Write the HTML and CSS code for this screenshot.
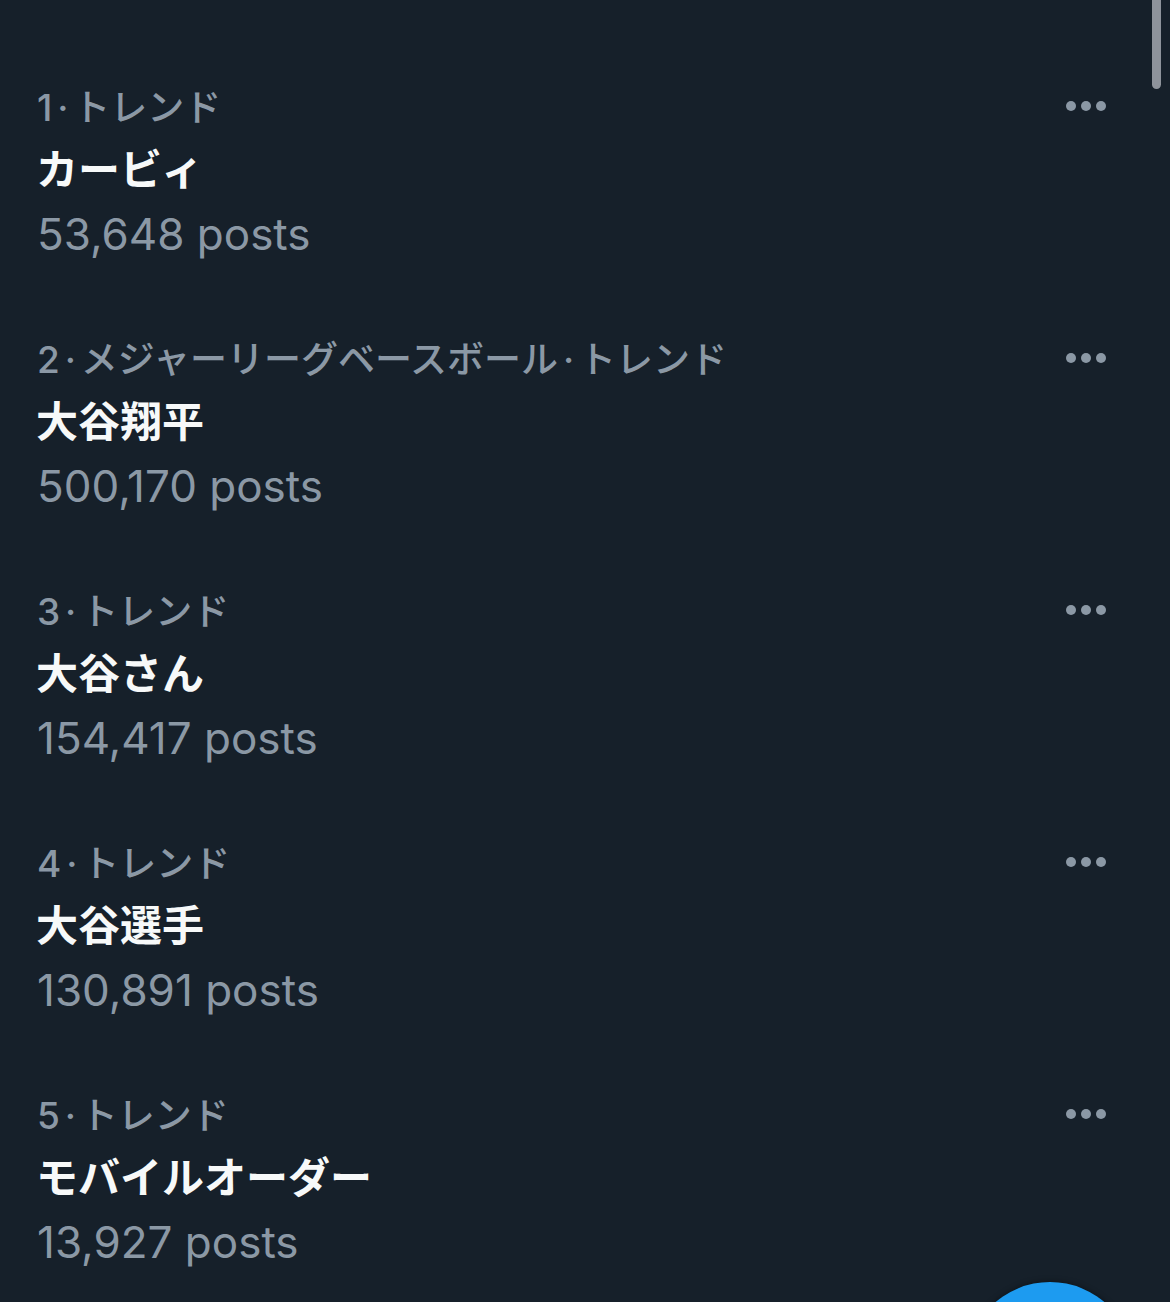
FILE: index.html
```html
<!DOCTYPE html>
<html lang="ja">
<head>
<meta charset="utf-8">
<title>トレンド</title>
<link rel="stylesheet" href="styles.css">
</head>
<body>
<div class="screen">
  <ul class="trends">
    <li class="trend">
      <div class="trend-body">
        <div class="trend-meta">1 · トレンド</div>
        <div class="trend-title">カービィ</div>
        <div class="trend-count">53,648 posts</div>
      </div>
      <div class="more"><span></span><span></span><span></span></div>
    </li>
    <li class="trend">
      <div class="trend-body">
        <div class="trend-meta">2 · メジャーリーグベースボール · トレンド</div>
        <div class="trend-title">大谷翔平</div>
        <div class="trend-count">500,170 posts</div>
      </div>
      <div class="more"><span></span><span></span><span></span></div>
    </li>
    <li class="trend">
      <div class="trend-body">
        <div class="trend-meta">3 · トレンド</div>
        <div class="trend-title">大谷さん</div>
        <div class="trend-count">154,417 posts</div>
      </div>
      <div class="more"><span></span><span></span><span></span></div>
    </li>
    <li class="trend">
      <div class="trend-body">
        <div class="trend-meta">4 · トレンド</div>
        <div class="trend-title">大谷選手</div>
        <div class="trend-count">130,891 posts</div>
      </div>
      <div class="more"><span></span><span></span><span></span></div>
    </li>
    <li class="trend">
      <div class="trend-body">
        <div class="trend-meta">5 · トレンド</div>
        <div class="trend-title">モバイルオーダー</div>
        <div class="trend-count">13,927 posts</div>
      </div>
      <div class="more"><span></span><span></span><span></span></div>
    </li>
  </ul>
  <div class="scrollbar"></div>
  <div class="fab"></div>
</div>
</body>
</html>
```
FILE: styles.css
```css
html, body {
  margin: 0;
  padding: 0;
  background: #16202a;
  height: 1302px;
  overflow: hidden;
}
.screen {
  position: relative;
  width: 1170px;
  height: 1302px;
  overflow: hidden;
  background: #16202a;
  font-family: Inter, "Noto Sans CJK JP", sans-serif;
}
.trends {
  list-style: none;
  margin: 0;
  padding: 50px 0 0 0;
}
.trend {
  display: flex;
  align-items: flex-start;
  padding: 32px 64px 33px 36px;
  height: 252px;
  box-sizing: border-box;
}
.trend-body {
  flex: 1;
  min-width: 0;
}
.trend-meta {
  font-family: Inter, "Noto Sans CJK JP", sans-serif;
  font-size: 37px;
  line-height: 52px;
  height: 52px;
  color: #8b98a5;
  word-spacing: -5px;
  font-weight: 500;
  padding-left: 1px;
}
.trend-title {
  font-family: "Noto Sans CJK JP", sans-serif;
  font-weight: 700;
  font-size: 42px;
  line-height: 66px;
  height: 66px;
  color: #f7f9f9;
}
.trend-count {
  font-family: Inter, sans-serif;
  font-size: 44px;
  line-height: 69px;
  height: 69px;
  color: #8b98a5;
  padding-left: 1px;
}
.more {
  display: flex;
  gap: 5px;
  margin-top: 19px;
}
.more span {
  width: 10px;
  height: 10px;
  border-radius: 50%;
  background: #8b98a5;
}
.scrollbar {
  position: absolute;
  left: 1152px;
  top: -10px;
  width: 9px;
  height: 99px;
  border-radius: 5px;
  background: #8e939b;
}
.fab {
  position: absolute;
  left: 966px;
  top: 1282px;
  width: 168px;
  height: 168px;
  border-radius: 50%;
  background: #1d9bf0;
  box-shadow: 0 0 6px rgba(0, 0, 0, 0.45);
}
```
